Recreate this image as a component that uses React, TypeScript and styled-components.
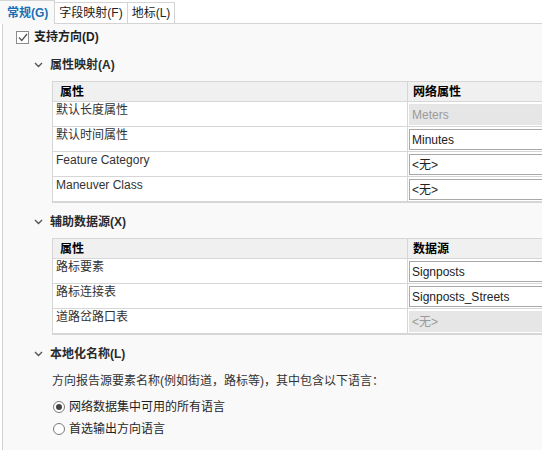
import React from 'react';
import styled, { createGlobalStyle } from 'styled-components';

const GlobalStyle = createGlobalStyle`
    body {
        margin: 0;
        font-family: "Liberation Sans", "Noto Sans CJK SC", sans-serif;
        font-size: 12px;
        line-height: 16px;
        color: #1f1f1f;
    }
`;

const Window = styled.div`
    width: 542px;
    height: 450px;
    overflow: hidden;
    background: #ffffff;
    display: flex;
    flex-direction: column;
`;

const TabBar = styled.div`
    display: flex;
    height: 24px;
    box-sizing: border-box;
    align-items: flex-end;
    border-bottom: 1px solid #d4d4d4;
`;

const Tab = styled.div<{ $active?: boolean }>`
    height: ${p => (p.$active ? '24px' : '21px')};
    box-sizing: border-box;
    padding: ${p => (p.$active ? '0 6px 0 7px' : '0 4px')};
    display: flex;
    align-items: center;
    font-weight: ${p => (p.$active ? 'bold' : 'normal')};
    color: ${p => (p.$active ? '#1b6fb5' : '#222')};
    background: ${p => (p.$active ? '#f9f9f9' : '#ffffff')};
    border: 1px solid #d4d4d4;
    border-left: ${p => (p.$active ? 'none' : '1px solid #d4d4d4')};
    border-bottom: none;
    margin-bottom: ${p => (p.$active ? '-1px' : '0')};
    margin-right: -1px;
`;

const Panel = styled.div`
    flex: 1;
    margin-left: 2px;
    border-left: 1px solid #d0d0d0;
    background: #f9f9f9;
    padding: 5px 0 0 13px;
    display: flex;
    flex-direction: column;
`;

const CheckRow = styled.label`
    display: flex;
    align-items: center;
    gap: 5px;
    height: 16px;
    font-weight: bold;
`;

const CheckBox = styled.span`
    width: 13px;
    height: 13px;
    box-sizing: border-box;
    border: 1px solid #8c8c8c;
    background: #fff;
    display: flex;
    align-items: center;
    justify-content: center;
`;

const Section = styled.div`
    padding-left: 18px;
    display: flex;
    flex-direction: column;
`;

const SectionHeader = styled.div<{ $top?: number }>`
    display: flex;
    align-items: center;
    gap: 7px;
    height: 16px;
    margin: ${p => p.$top ?? 11}px 0 8px 0;
    font-weight: bold;
    color: #2b2b2b;
`;

const Body = styled.div`
    padding-left: 18px;
    display: flex;
    flex-direction: column;
`;

const Table = styled.div`
    display: grid;
    grid-template-columns: 354px 200px;
    border: 1px solid #d6d6d6;
    border-right: none;
    background: #ffffff;
`;

const HeadCell = styled.div<{ $first?: boolean }>`
    height: 20px;
    box-sizing: border-box;
    background: #f0f0f0;
    border-bottom: 1px solid #d6d6d6;
    border-left: ${p => (p.$first ? 'none' : '1px solid #d6d6d6')};
    padding-left: ${p => (p.$first ? '7px' : '5px')};
    font-weight: bold;
    color: #000;
    display: flex;
    align-items: center;
`;

const NameCell = styled.div`
    height: 25px;
    box-sizing: border-box;
    border-bottom: 1px solid #d6d6d6;
    padding: 1px 0 0 3px;
    color: #333;
    line-height: 14px;
`;

const ValueCell = styled.div`
    height: 25px;
    box-sizing: border-box;
    border-bottom: 1px solid #d6d6d6;
    border-left: 1px solid #d6d6d6;
    padding: 2px 0 0 1px;
`;

const Input = styled.div<{ $disabled?: boolean }>`
    height: 21px;
    box-sizing: border-box;
    border: 1px solid ${p => (p.$disabled ? '#e4e4e4' : '#a9a9a9')};
    background: ${p => (p.$disabled ? '#e6e6e6' : '#ffffff')};
    color: ${p => (p.$disabled ? '#9a9a9a' : '#222')};
    padding-left: 2px;
    display: flex;
    align-items: center;
`;

const Description = styled.div`
    color: #333;
    margin: 3px 0 7px 0;
`;

const RadioRow = styled.label`
    display: flex;
    align-items: center;
    gap: 4px;
    height: 22px;
    color: #1f1f1f;
    padding-left: 1px;
`;

const Radio = styled.span<{ $checked?: boolean }>`
    width: 12px;
    height: 12px;
    box-sizing: border-box;
    border-radius: 50%;
    border: 1px solid #7a7a7a;
    background: #fff;
    display: flex;
    align-items: center;
    justify-content: center;
    &::after {
        content: '';
        display: ${p => (p.$checked ? 'block' : 'none')};
        width: 6px;
        height: 6px;
        border-radius: 50%;
        background: #444;
    }
`;

const Chevron = () => (
    <svg width="9" height="6" viewBox="0 0 9 6">
        <path d="M1 1 L4.5 4.5 L8 1" fill="none" stroke="#555" strokeWidth="1.4" />
    </svg>
);

type Row = { name: string; value: string; disabled?: boolean };

function PropTable(props: { valueHead: string; rows: Row[] }) {
    return (
        <Table>
            <HeadCell $first>属性</HeadCell>
            <HeadCell>{props.valueHead}</HeadCell>
            {props.rows.map(r => (
                <React.Fragment key={r.name}>
                    <NameCell>{r.name}</NameCell>
                    <ValueCell>
                        <Input $disabled={r.disabled}>{r.value}</Input>
                    </ValueCell>
                </React.Fragment>
            ))}
        </Table>
    );
}

const attrRows: Row[] = [
    { name: '默认长度属性', value: 'Meters', disabled: true },
    { name: '默认时间属性', value: 'Minutes' },
    { name: 'Feature Category', value: '<无>' },
    { name: 'Maneuver Class', value: '<无>' },
];

const sourceRows: Row[] = [
    { name: '路标要素', value: 'Signposts' },
    { name: '路标连接表', value: 'Signposts_Streets' },
    { name: '道路岔路口表', value: '<无>', disabled: true },
];

export default function App() {
    return (
        <Window>
            <GlobalStyle />
            <TabBar>
                <Tab $active>常规(G)</Tab>
                <Tab>字段映射(F)</Tab>
                <Tab>地标(L)</Tab>
            </TabBar>
            <Panel>
                <CheckRow>
                    <CheckBox>
                        <svg width="10" height="9" viewBox="0 0 10 9">
                            <path d="M1 4.5 L3.8 7.5 L9 1" fill="none" stroke="#555" strokeWidth="1.3" />
                        </svg>
                    </CheckBox>
                    支持方向(D)
                </CheckRow>
                <Section>
                    <SectionHeader $top={12}><Chevron />属性映射(A)</SectionHeader>
                    <Body>
                        <PropTable valueHead="网络属性" rows={attrRows} />
                    </Body>
                    <SectionHeader><Chevron />辅助数据源(X)</SectionHeader>
                    <Body>
                        <PropTable valueHead="数据源" rows={sourceRows} />
                    </Body>
                    <SectionHeader><Chevron />本地化名称(L)</SectionHeader>
                    <Body>
                        <Description>方向报告源要素名称(例如街道，路标等)，其中包含以下语言：</Description>
                        <RadioRow><Radio $checked />网络数据集中可用的所有语言</RadioRow>
                        <RadioRow><Radio />首选输出方向语言</RadioRow>
                    </Body>
                </Section>
            </Panel>
        </Window>
    );
}
